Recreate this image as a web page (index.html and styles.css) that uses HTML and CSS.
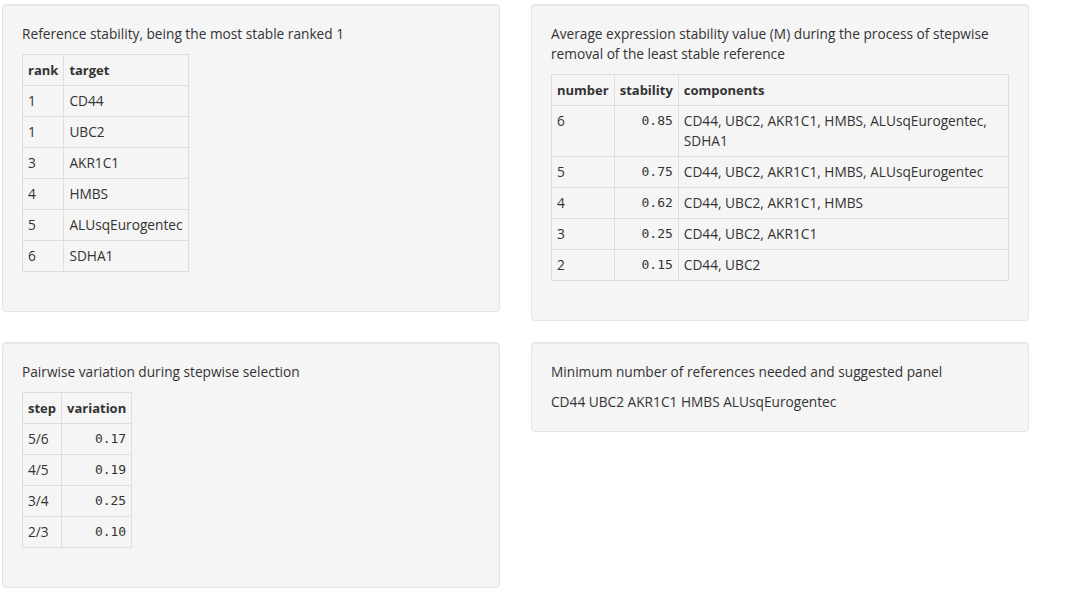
FILE: index.html
```html
<!DOCTYPE html>
<html>
<head>
<meta charset="utf-8">
<link rel="stylesheet" href="styles.css">
</head>
<body>
<div class="grid">
  <div class="well">
    <p class="title">Reference stability, being the most stable ranked 1</p>
    <table class="tbl">
      <thead><tr><th>rank</th><th>target</th></tr></thead>
      <tbody>
        <tr><td>1</td><td>CD44</td></tr>
        <tr><td>1</td><td>UBC2</td></tr>
        <tr><td>3</td><td>AKR1C1</td></tr>
        <tr><td>4</td><td>HMBS</td></tr>
        <tr><td>5</td><td>ALUsqEurogentec</td></tr>
        <tr><td>6</td><td>SDHA1</td></tr>
      </tbody>
    </table>
  </div>
  <div class="well">
    <p class="title">Average expression stability value (M) during the process of stepwise removal of the least stable reference</p>
    <table class="tbl">
      <thead><tr><th>number</th><th>stability</th><th>components</th></tr></thead>
      <tbody>
        <tr><td>6</td><td class="num">0.85</td><td>CD44, UBC2, AKR1C1, HMBS, ALUsqEurogentec, SDHA1</td></tr>
        <tr><td>5</td><td class="num">0.75</td><td>CD44, UBC2, AKR1C1, HMBS, ALUsqEurogentec</td></tr>
        <tr><td>4</td><td class="num">0.62</td><td>CD44, UBC2, AKR1C1, HMBS</td></tr>
        <tr><td>3</td><td class="num">0.25</td><td>CD44, UBC2, AKR1C1</td></tr>
        <tr><td>2</td><td class="num">0.15</td><td>CD44, UBC2</td></tr>
      </tbody>
    </table>
  </div>
  <div class="well">
    <p class="title">Pairwise variation during stepwise selection</p>
    <table class="tbl">
      <thead><tr><th>step</th><th>variation</th></tr></thead>
      <tbody>
        <tr><td>5/6</td><td class="num">0.17</td></tr>
        <tr><td>4/5</td><td class="num">0.19</td></tr>
        <tr><td>3/4</td><td class="num">0.25</td></tr>
        <tr><td>2/3</td><td class="num">0.10</td></tr>
      </tbody>
    </table>
  </div>
  <div class="well">
    <p class="title">Minimum number of references needed and suggested panel</p>
    <p class="panel">CD44 UBC2 AKR1C1 HMBS ALUsqEurogentec</p>
  </div>
</div>
</body>
</html>
```
FILE: styles.css
```css
html, body {
  margin: 0;
  background: #fff;
}
body {
  font-family: "Open Sans", "Noto Sans", sans-serif;
  font-size: 13.7px;
  line-height: 20px;
  color: #333;
}
.grid {
  display: grid;
  grid-template-columns: 498px 498px;
  column-gap: 31px;
  row-gap: 21px;
  align-items: start;
  padding: 4px 0 0 2px;
}
.well {
  background: #f5f5f5;
  border: 1px solid #e3e3e3;
  border-radius: 4px;
  box-shadow: inset 0 1px 1px rgba(0,0,0,.05);
  padding: 19px;
}
.title {
  margin: 0 0 10px;
}
.panel {
  margin: 0;
}
.tbl {
  border-collapse: collapse;
  margin-bottom: 20px;
}
.tbl th, .tbl td {
  border: 1px solid #ddd;
  padding: 5px;
  text-align: left;
  vertical-align: top;
  line-height: 20px;
}
.tbl th {
  font-weight: bold;
  font-size: 13px;
}
.tbl td.num {
  text-align: right;
  font-family: "DejaVu Sans Mono", monospace;
  font-size: 13px;
}
```
